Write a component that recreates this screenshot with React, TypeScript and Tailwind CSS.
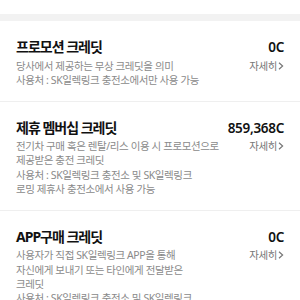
import React from 'react';

type Credit = {
  title: string;
  amount: string;
  lines: string[];
};

const credits: Credit[] = [
  {
    title: '프로모션 크레딧',
    amount: '0C',
    lines: ['당사에서 제공하는 무상 크레딧을 의미', '사용처 : SK일렉링크 충전소에서만 사용 가능'],
  },
  {
    title: '제휴 멤버십 크레딧',
    amount: '859,368C',
    lines: [
      '전기차 구매 혹은 렌탈/리스 이용 시 프로모션으로',
      '제공받은 충전 크레딧',
      '사용처 : SK일렉링크 충전소 및 SK일렉링크',
      '로밍 제휴사 충전소에서 사용 가능',
    ],
  },
  {
    title: 'APP구매 크레딧',
    amount: '0C',
    lines: [
      '사용자가 직접 SK일렉링크 APP을 통해',
      '자신에게 보내기 또는 타인에게 전달받은',
      '크레딧',
      '사용처 : SK일렉링크 충전소 및 SK일렉링크',
      '로밍 제휴사 충전소에서 사용 가능',
    ],
  },
];

function CreditRow({ item }: { item: Credit }) {
  return (
    <div className="px-4 pt-[17px] pb-[13.5px] border-b border-[#efefef]">
      <div className="flex items-center justify-between">
        <h3 className="text-[14px] leading-[18px] font-bold text-[#111] tracking-[-1px]">{item.title}</h3>
        <span className="text-[13.5px] leading-[18px] font-semibold text-[#111] tracking-[-0.3px]">{item.amount}</span>
      </div>
      <div className="flex justify-between items-start mt-[2.5px]">
        <div className="text-[10.5px] leading-[14.3px] text-[#8a8a8a] tracking-[-0.4px]">
          {item.lines.map((l, i) => (
            <p key={i}>{l}</p>
          ))}
        </div>
        <span className="flex items-center text-[10.5px] leading-[14.3px] text-[#777] tracking-[-0.4px]">
          자세히
          <svg width="6" height="8" viewBox="0 0 6 8" className="ml-[1px]">
            <path d="M1 0.8 L4.6 4 L1 7.2" stroke="#777" strokeWidth="1.2" fill="none" />
          </svg>
        </span>
      </div>
    </div>
  );
}

export default function App() {
  return (
    <div
      className="w-[300px] h-[300px] overflow-hidden bg-white"
      style={{ fontFamily: '"Noto Sans", "Noto Sans CJK KR", sans-serif' }}
    >
      <div className="h-[14px] bg-white" />
      <div className="h-[7px] bg-[#f2f2f2]" />
      {credits.map((c, i) => (
        <CreditRow key={i} item={c} />
      ))}
    </div>
  );
}
